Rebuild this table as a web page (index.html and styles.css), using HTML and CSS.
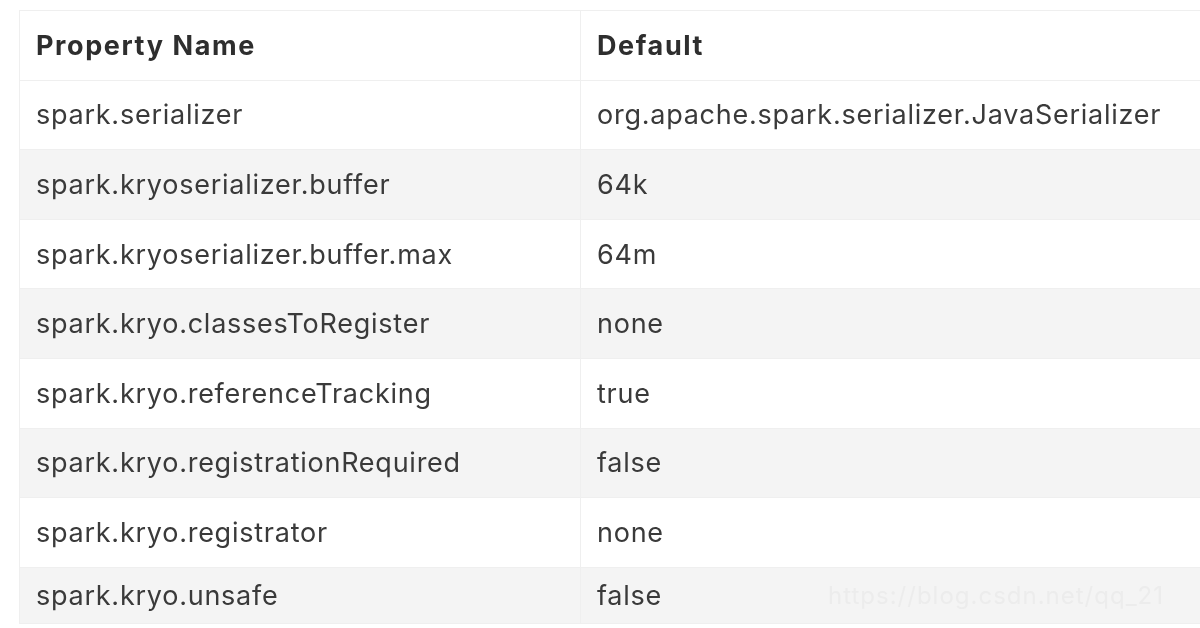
FILE: index.html
```html
<!DOCTYPE html>
<html lang="en">
<head>
    <meta charset="UTF-8">
    <title>Spark Properties</title>
    <link rel="stylesheet" href="styles.css">
</head>
<body>

<div class="page">
    <table class="props">
        <thead>
            <tr>
                <th class="col-name">Property Name</th>
                <th class="col-default">Default</th>
            </tr>
        </thead>
        <tbody>
            <tr><td>spark.serializer</td><td>org.apache.spark.serializer.JavaSerializer</td></tr>
            <tr><td>spark.kryoserializer.buffer</td><td>64k</td></tr>
            <tr><td>spark.kryoserializer.buffer.max</td><td>64m</td></tr>
            <tr><td>spark.kryo.classesToRegister</td><td>none</td></tr>
            <tr><td>spark.kryo.referenceTracking</td><td>true</td></tr>
            <tr><td>spark.kryo.registrationRequired</td><td>false</td></tr>
            <tr><td>spark.kryo.registrator</td><td>none</td></tr>
            <tr class="last"><td>spark.kryo.unsafe</td><td>false<span class="watermark">https://blog.csdn.net/qq_21</span></td></tr>
        </tbody>
    </table>
</div>

</body>
</html>
```

FILE: styles.css
```css
* {
    box-sizing: border-box;
    margin: 0;
    padding: 0;
}

html, body {
    height: 100%;
    overflow: hidden;
    background: #fff;
}

body {
    font-family: 'Inter', 'Open Sans', sans-serif;
    color: #3a3a3a;
}

.page {
    padding: 10px 0 0 19px;
}

.props {
    border-collapse: collapse;
    width: 1260px;
    table-layout: fixed;
    font-size: 27px;
    letter-spacing: 0.75px;
    filter: blur(0.4px);
}

.col-name {
    width: 561px;
}

.props th,
.props td {
    text-align: left;
    padding: 0 16px;
    height: 69.6px;
    border: 1px solid #efefef;
    vertical-align: middle;
    white-space: nowrap;
}

.props th {
    font-weight: 700;
    color: #2e2e2e;
    letter-spacing: 1.6px;
}

.props td {
    font-weight: 400;
}

.props tbody tr:nth-child(odd) {
    background: #fff;
}

.props tbody tr:nth-child(even) {
    background: #f4f4f4;
}

.props tr.last td {
    height: 56px;
    position: relative;
}

.watermark {
    position: absolute;
    left: 247px;
    top: 13px;
    font-size: 24px;
    color: #ececec;
    letter-spacing: 1px;
}
```
